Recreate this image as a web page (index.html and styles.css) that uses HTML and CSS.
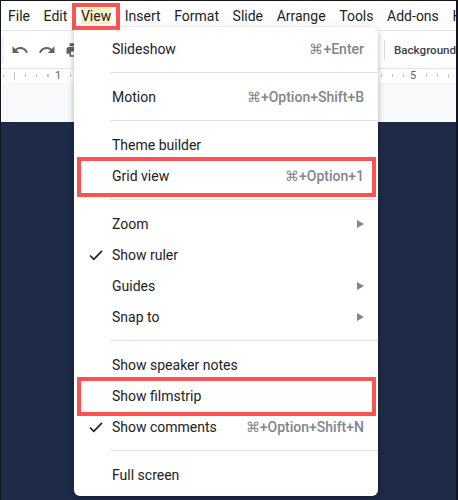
FILE: index.html
```html
<!DOCTYPE html>
<html lang="en">
<head>
  <meta charset="UTF-8">
  <title>Slides View menu</title>
  <link rel="stylesheet" href="styles.css">
</head>
<body>
  <div class="page">
    <nav class="menubar">
      <span>File</span>
      <span>Edit</span>
      <span class="active">View</span>
      <span>Insert</span>
      <span>Format</span>
      <span>Slide</span>
      <span>Arrange</span>
      <span>Tools</span>
      <span>Add-ons</span>
      <span>Help</span>
    </nav>

    <div class="toolbar">
      <span class="pill"></span>
      <svg class="tool" viewBox="0 0 24 24"><path d="M12.500 8c-2.650 0-5.050.99-6.900 2.600L2 7v9h9l-3.620-3.620c1.390-1.160 3.160-1.880 5.120-1.880 3.540 0 6.550 2.310 7.600 5.500l2.370-.78C21.080 11.030 17.150 8 12.500 8z" fill="#5f6368"/></svg>
      <svg class="tool flip" viewBox="0 0 24 24"><path d="M12.500 8c-2.650 0-5.050.99-6.900 2.600L2 7v9h9l-3.620-3.620c1.390-1.160 3.160-1.880 5.120-1.880 3.540 0 6.550 2.310 7.600 5.500l2.370-.78C21.080 11.030 17.150 8 12.500 8z" fill="#5f6368"/></svg>
      <svg class="tool" viewBox="0 0 24 24"><path d="M19 8H5c-1.660 0-3 1.340-3 3v6h4v4h12v-4h4v-6c0-1.660-1.340-3-3-3zm-3 11H8v-5h8v5zm3-7c-.55 0-1-.45-1-1s.45-1 1-1 1 .45 1 1-.45 1-1 1zm-1-9H6v4h12V3z" fill="#5f6368"/></svg>
      <span class="divider"></span>
      <span class="bg-btn">Background</span>
    </div>

    <div class="ruler">
      <span class="mark one">1</span>
      <span class="mark five">5</span>
    </div>

    <div class="stage"></div>

    <div class="menu">
      <div class="item"><span class="label">Slideshow</span><span class="keys">⌘+Enter</span></div>
      <hr>
      <div class="item"><span class="label">Motion</span><span class="keys">⌘+Option+Shift+B</span></div>
      <hr>
      <div class="item"><span class="label">Theme builder</span></div>
      <div class="item"><span class="label">Grid view</span><span class="keys">⌘+Option+1</span></div>
      <hr>
      <div class="item"><span class="label">Zoom</span><span class="arrow"></span></div>
      <div class="item">
        <svg class="check" viewBox="0 0 14 12"><path d="M1 6.500L4.800 10.300L13 1.800" fill="none" stroke="#202124" stroke-width="1.700"/></svg>
        <span class="label">Show ruler</span>
      </div>
      <div class="item"><span class="label">Guides</span><span class="arrow"></span></div>
      <div class="item"><span class="label">Snap to</span><span class="arrow"></span></div>
      <hr>
      <div class="item"><span class="label">Show speaker notes</span></div>
      <div class="item"><span class="label">Show filmstrip</span></div>
      <div class="item">
        <svg class="check" viewBox="0 0 14 12"><path d="M1 6.500L4.800 10.300L13 1.800" fill="none" stroke="#202124" stroke-width="1.700"/></svg>
        <span class="label">Show comments</span><span class="keys">⌘+Option+Shift+N</span>
      </div>
      <hr>
      <div class="item"><span class="label">Full screen</span></div>
    </div>

    <div class="callout view-box"></div>
    <div class="callout grid-box"></div>
    <div class="callout film-box"></div>
  </div>
</body>
</html>
```

FILE: styles.css
```css
* {
  box-sizing: border-box;
}

body {
  margin: 0;
  font-family: 'Roboto', 'Liberation Sans', sans-serif;
}

.page {
  position: relative;
  width: 458px;
  height: 500px;
  overflow: hidden;
  display: flex;
  flex-direction: column;
  padding: 1px 2px 0 1px;
  background: #14171f;
}

.menubar {
  height: 30px;
  flex: none;
  background: #fff;
  border-bottom: 1px solid #e3e5e8;
  display: flex;
  align-items: center;
  gap: 13.6px;
  padding: 0 0 0 7px;
  font-size: 14px;
  color: #202124;
  white-space: nowrap;
  overflow: hidden;
}

.menubar .active {
  background: #feefc3;
}

.toolbar {
  height: 38px;
  flex: none;
  background: #fff;
  border-bottom: 1px solid #e3e5e8;
  display: flex;
  align-items: center;
  gap: 9px;
}

.pill {
  flex: none;
  width: 3px;
  height: 28px;
  margin-right: -2px;
  background: #f1f3f4;
  border-radius: 0 4px 4px 0;
}

.tool {
  flex: none;
  width: 18px;
  height: 18px;
}

.tool.flip {
  transform: scaleX(-1);
}

.divider {
  flex: none;
  width: 1px;
  height: 20px;
  background: #dadce0;
  margin-left: 292px;
}

.bg-btn {
  flex: none;
  font-size: 11.6px;
  font-weight: 500;
  color: #3c4043;
  white-space: nowrap;
}

.ruler {
  height: 14px;
  flex: none;
  position: relative;
  font-size: 11px;
  color: #5f6368;
  background-color: #fff;
  background-image:
    linear-gradient(#bdc1c6, #bdc1c6),
    repeating-linear-gradient(to right, #bdc1c6 0 1px, transparent 1px 11.125px);
  background-size: 1px 8px, 100% 3px;
  background-position: 13px 3px, 2px 5px;
  background-repeat: no-repeat;
}

.mark {
  position: absolute;
  top: 0;
  background: #fff;
  padding: 0 3px;
}

.mark.one {
  left: 51px;
}

.mark.five {
  left: 406px;
}

.stage {
  flex: 1;
  background: #1d2b47;
  border-top: 39px solid #f8f9fa;
}

.menu {
  position: absolute;
  left: 74px;
  top: 27px;
  width: 304px;
  height: 469px;
  background: #fff;
  border-radius: 0 6px 6px 6px;
  box-shadow: 0 2px 6px rgba(0, 0, 0, 0.3);
  padding-top: 6px;
  font-size: 14px;
  color: #202124;
}

.item {
  position: relative;
  height: 31px;
  display: flex;
  align-items: center;
  justify-content: space-between;
  padding: 0 14px 0 38px;
  white-space: nowrap;
}

.keys {
  color: #80868b;
  font-weight: 500;
}

.arrow {
  width: 0;
  height: 0;
  border-left: 7px solid #80868b;
  border-top: 4px solid transparent;
  border-bottom: 4px solid transparent;
}

.check {
  position: absolute;
  left: 15px;
  top: 10px;
  width: 14px;
  height: 12px;
}

hr {
  border: none;
  height: 1px;
  background: #dfe1e5;
  margin: 8px 0 8px 36px;
}

.callout {
  position: absolute;
  border: 4px solid #fb5252;
}

.view-box {
  left: 72px;
  top: 3px;
  width: 48px;
  height: 27px;
}

.grid-box {
  left: 77px;
  top: 157px;
  width: 299px;
  height: 40px;
}

.film-box {
  left: 77px;
  top: 377px;
  width: 299px;
  height: 39px;
}
```
